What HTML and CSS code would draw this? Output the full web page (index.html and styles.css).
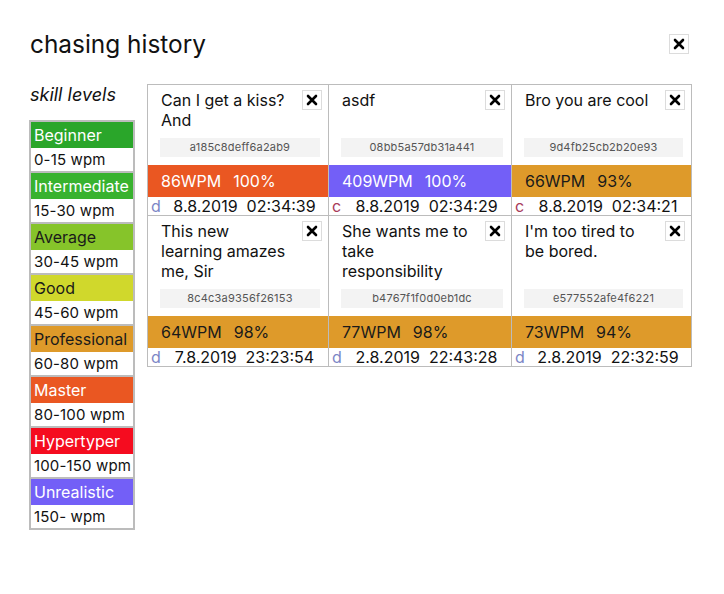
FILE: index.html
```html
<!DOCTYPE html>
<html>
<head>
<meta charset="utf-8">
<link rel="stylesheet" href="styles.css">
</head>
<body>
<div class="page">
  <header class="header">
    <h1 class="title">chasing history</h1>
    <button class="close"><svg width="12" height="12" viewBox="0 0 12 12"><path d="M2 2 L10 10 M10 2 L2 10" stroke="#000" stroke-width="2.6" stroke-linecap="round"/></svg></button>
  </header>
  <main class="main">
    <aside class="levels">
      <h2 class="levels-title">skill levels</h2>
      <div class="legend">
        <div class="lv"><div class="lv-name beginner">Beginner</div><div class="lv-range">0-15 wpm</div></div>
        <div class="lv"><div class="lv-name intermediate">Intermediate</div><div class="lv-range">15-30 wpm</div></div>
        <div class="lv"><div class="lv-name average">Average</div><div class="lv-range">30-45 wpm</div></div>
        <div class="lv"><div class="lv-name good">Good</div><div class="lv-range">45-60 wpm</div></div>
        <div class="lv"><div class="lv-name professional">Professional</div><div class="lv-range">60-80 wpm</div></div>
        <div class="lv"><div class="lv-name master">Master</div><div class="lv-range">80-100 wpm</div></div>
        <div class="lv"><div class="lv-name hypertyper">Hypertyper</div><div class="lv-range">100-150 wpm</div></div>
        <div class="lv"><div class="lv-name unrealistic">Unrealistic</div><div class="lv-range">150- wpm</div></div>
      </div>
    </aside>
    <section class="grid">
      <div class="card">
        <div class="card-top"><div class="card-title">Can I get a kiss? And</div><button class="close small"><svg width="12" height="12" viewBox="0 0 12 12"><path d="M2 2 L10 10 M10 2 L2 10" stroke="#000" stroke-width="2.6" stroke-linecap="round"/></svg></button></div>
        <div class="hash">a185c8deff6a2ab9</div>
        <div class="band master"><span>86WPM</span><span class="acc">100%</span></div>
        <div class="date"><span class="kind d">d</span><span class="when">8.8.2019  02:34:39</span></div>
      </div>
      <div class="card">
        <div class="card-top"><div class="card-title">asdf</div><button class="close small"><svg width="12" height="12" viewBox="0 0 12 12"><path d="M2 2 L10 10 M10 2 L2 10" stroke="#000" stroke-width="2.6" stroke-linecap="round"/></svg></button></div>
        <div class="hash">08bb5a57db31a441</div>
        <div class="band unrealistic"><span>409WPM</span><span class="acc">100%</span></div>
        <div class="date"><span class="kind c">c</span><span class="when">8.8.2019  02:34:29</span></div>
      </div>
      <div class="card">
        <div class="card-top"><div class="card-title">Bro you are cool</div><button class="close small"><svg width="12" height="12" viewBox="0 0 12 12"><path d="M2 2 L10 10 M10 2 L2 10" stroke="#000" stroke-width="2.6" stroke-linecap="round"/></svg></button></div>
        <div class="hash">9d4fb25cb2b20e93</div>
        <div class="band professional"><span>66WPM</span><span class="acc">93%</span></div>
        <div class="date"><span class="kind c">c</span><span class="when">8.8.2019  02:34:21</span></div>
      </div>
      <div class="card">
        <div class="card-top"><div class="card-title">This new learning amazes me, Sir</div><button class="close small"><svg width="12" height="12" viewBox="0 0 12 12"><path d="M2 2 L10 10 M10 2 L2 10" stroke="#000" stroke-width="2.6" stroke-linecap="round"/></svg></button></div>
        <div class="hash">8c4c3a9356f26153</div>
        <div class="band professional"><span>64WPM</span><span class="acc">98%</span></div>
        <div class="date"><span class="kind d">d</span><span class="when">7.8.2019  23:23:54</span></div>
      </div>
      <div class="card">
        <div class="card-top"><div class="card-title">She wants me to take responsibility</div><button class="close small"><svg width="12" height="12" viewBox="0 0 12 12"><path d="M2 2 L10 10 M10 2 L2 10" stroke="#000" stroke-width="2.6" stroke-linecap="round"/></svg></button></div>
        <div class="hash">b4767f1f0d0eb1dc</div>
        <div class="band professional"><span>77WPM</span><span class="acc">98%</span></div>
        <div class="date"><span class="kind d">d</span><span class="when">2.8.2019  22:43:28</span></div>
      </div>
      <div class="card">
        <div class="card-top"><div class="card-title">I'm too tired to be bored.</div><button class="close small"><svg width="12" height="12" viewBox="0 0 12 12"><path d="M2 2 L10 10 M10 2 L2 10" stroke="#000" stroke-width="2.6" stroke-linecap="round"/></svg></button></div>
        <div class="hash">e577552afe4f6221</div>
        <div class="band professional"><span>73WPM</span><span class="acc">94%</span></div>
        <div class="date"><span class="kind d">d</span><span class="when">2.8.2019  22:32:59</span></div>
      </div>
    </section>
  </main>
</div>
</body>
</html>
```

FILE: styles.css
```css
* { box-sizing: border-box; }
html, body { margin: 0; padding: 0; background: #fff; }
body {
  font-family: Inter, "Noto Sans", "Liberation Sans", sans-serif;
  color: #111;
}
.page {
  padding: 29px 35px 0 29px;
}
.header {
  display: flex;
  align-items: center;
  justify-content: space-between;
  height: 30px;
}
.title {
  margin: 0 0 0 1px;
  font-size: 24.4px;
  font-weight: 400;
  line-height: 30px;
}
.close {
  width: 20px;
  height: 20px;
  padding: 0;
  margin: 0;
  border: 1px solid #dcdcdc;
  background: #fff;
  display: flex;
  align-items: center;
  justify-content: center;
}
.main {
  display: flex;
  align-items: flex-start;
  gap: 12px;
  margin-top: 25px;
}
.levels {
  width: 106px;
  flex: none;
}
.levels-title {
  margin: 0 0 0 1px;
  font-size: 18px;
  font-style: italic;
  font-weight: 400;
  line-height: 22px;
  height: 36px;
}
.legend {
  border: 2px solid #bcbcbc;
  background: #bcbcbc;
  display: flex;
  flex-direction: column;
  gap: 2px;
}
.lv-name {
  height: 26px;
  line-height: 26px;
  padding-left: 3px;
  font-size: 16px;
  color: #fff;
  white-space: nowrap;
}
.lv-range {
  height: 23px;
  line-height: 23px;
  padding-left: 3px;
  font-size: 15px;
  letter-spacing: 0.15px;
  background: #fff;
  color: #111;
  white-space: nowrap;
}
.beginner { background: #2aa62a; }
.intermediate { background: #38b22f; }
.average { background: #86c42a; color: #1a1a1a; }
.good { background: #d0d82c; color: #1a1a1a; }
.professional { background: #de9a2a; color: #1a1a1a; }
.master { background: #ea5722; color: #fff; }
.hypertyper { background: #f50c1f; color: #fff; }
.unrealistic { background: #735ff7; color: #fff; }

.grid {
  width: 545px;
  display: grid;
  grid-template-columns: 181px 183px 180px;
  border-left: 1px solid #bcbcbc;
  border-top: 1px solid #bcbcbc;
}
.card {
  border-right: 1px solid #bcbcbc;
  border-bottom: 1px solid #bcbcbc;
  display: flex;
  flex-direction: column;
  padding-top: 5px;
}
.card-top {
  display: flex;
  justify-content: space-between;
  align-items: flex-start;
  padding: 0 6px 0 13px;
  flex: 1;
  min-height: 40px;
}
.card-title {
  font-size: 16px;
  line-height: 20px;
  padding-right: 10px;
  color: #111;
}
.close.small { flex: none; }
.hash {
  margin: 8px 8px 0 12px;
  height: 19px;
  line-height: 19px;
  background: #f3f3f3;
  color: #555;
  font-size: 11px;
  text-align: center;
  letter-spacing: 0.2px;
}
.band {
  margin-top: 8px;
  height: 32px;
  line-height: 32px;
  padding-left: 13px;
  font-size: 16px;
}
.band .acc { margin-left: 12px; }
.date {
  display: flex;
  height: 18px;
  line-height: 18px;
  font-size: 16px;
  padding-left: 3px;
}
.kind { width: 10px; flex: none; }
.kind.d { color: #7c86c6; }
.kind.c { color: #a83a58; }
.when {
  flex: 1;
  text-align: center;
  white-space: pre;
  color: #111;
}
```
